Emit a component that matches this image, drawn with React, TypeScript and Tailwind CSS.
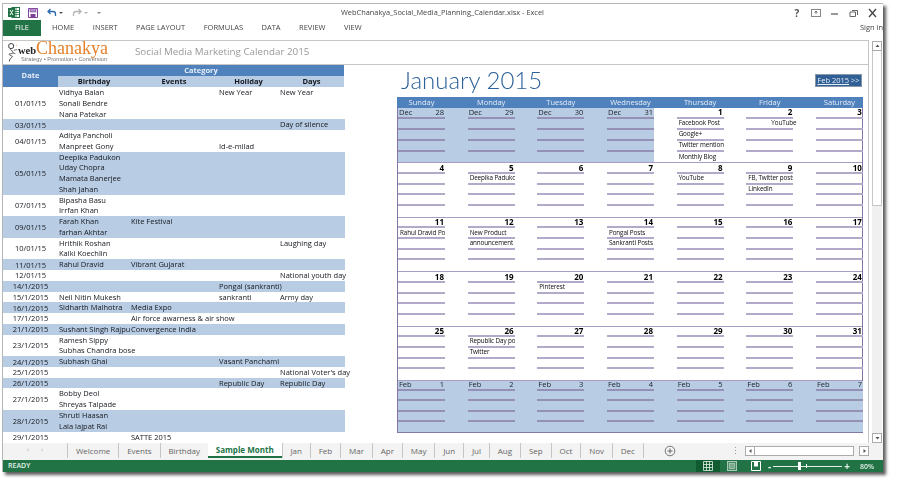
import { Fragment } from 'react'

type Row = { date: string; lines: string[][] }

const rows: Row[] = [
  { date: '01/01/15', lines: [['Vidhya Balan', '', 'New Year', 'New Year'], ['Sonali Bendre'], ['Nana Patekar']] },
  { date: '03/01/15', lines: [['', '', '', 'Day of silence']] },
  { date: '04/01/15', lines: [['Aditya Pancholi'], ['Manpreet Gony', '', 'Id-e-milad']] },
  { date: '05/01/15', lines: [['Deepika Padukon'], ['Uday Chopra'], ['Mamata Banerjee'], ['Shah Jahan']] },
  { date: '07/01/15', lines: [['Bipasha Basu'], ['Irrfan Khan']] },
  { date: '09/01/15', lines: [['Farah Khan', 'Kite Festival'], ['farhan Akhtar']] },
  { date: '10/01/15', lines: [['Hrithik Roshan', '', '', 'Laughing day'], ['Kalki Koechlin']] },
  { date: '11/01/15', lines: [['Rahul Dravid', 'Vibrant Gujarat']] },
  { date: '12/01/15', lines: [['', '', '', 'National youth day']] },
  { date: '14/1/2015', lines: [['', '', 'Pongal (sankranti)']] },
  { date: '15/1/2015', lines: [['Neil Nitin Mukesh', '', 'sankranti', 'Army day']] },
  { date: '16/1/2015', lines: [['Sidharth Malhotra', 'Media Expo']] },
  { date: '17/1/2015', lines: [['', 'Air force awarness & air show']] },
  { date: '21/1/2015', lines: [['Sushant Singh Rajput', 'Convergence India']] },
  { date: '23/1/2015', lines: [['Ramesh Sippy'], ['Subhas Chandra bose']] },
  { date: '24/1/2015', lines: [['Subhash Ghai', '', 'Vasant Panchami']] },
  { date: '25/1/2015', lines: [['', '', '', "National Voter's day"]] },
  { date: '26/1/2015', lines: [['', '', 'Republic Day', 'Republic Day']] },
  { date: '27/1/2015', lines: [['Bobby Deol'], ['Shreyas Talpade']] },
  { date: '28/1/2015', lines: [['Shruti Haasan'], ['Lala lajpat Rai']] },
  { date: '29/1/2015', lines: [['', 'SATTE 2015']] },
]

type Day = { label?: string; num: number; notes?: string[] }

const weeks: Day[][] = [
  [
    { label: 'Dec', num: 28 },
    { label: 'Dec', num: 29 },
    { label: 'Dec', num: 30 },
    { label: 'Dec', num: 31 },
    { num: 1, notes: ['Facebook Post', 'Google+', 'Twitter mention', 'Monthly Blog'] },
    { num: 2, notes: ['YouTube'] },
    { num: 3 },
  ],
  [
    { num: 4 },
    { num: 5, notes: ['Deepika Padukone'] },
    { num: 6 },
    { num: 7 },
    { num: 8, notes: ['YouTube'] },
    { num: 9, notes: ['FB, Twitter posts', 'LinkedIn'] },
    { num: 10 },
  ],
  [
    { num: 11, notes: ['Rahul Dravid Post'] },
    { num: 12, notes: ['New Product', 'announcement'] },
    { num: 13 },
    { num: 14, notes: ['Pongal Posts', 'Sankranti Posts'] },
    { num: 15 },
    { num: 16 },
    { num: 17 },
  ],
  [
    { num: 18 },
    { num: 19 },
    { num: 20, notes: ['Pinterest'] },
    { num: 21 },
    { num: 22 },
    { num: 23 },
    { num: 24 },
  ],
  [
    { num: 25 },
    { num: 26, notes: ['Republic Day post', 'Twitter'] },
    { num: 27 },
    { num: 28 },
    { num: 29 },
    { num: 30 },
    { num: 31 },
  ],
  [1, 2, 3, 4, 5, 6, 7].map((num) => ({ label: 'Feb', num })),
]

const dayNames = ['Sunday', 'Monday', 'Tuesday', 'Wednesday', 'Thursday', 'Friday', 'Saturday']
const ribbonTabs = ['HOME', 'INSERT', 'PAGE LAYOUT', 'FORMULAS', 'DATA', 'REVIEW', 'VIEW']
const sheetTabs = ['Welcome', 'Events', 'Birthday', 'Sample Month', 'Jan', 'Feb', 'Mar', 'Apr', 'May', 'Jun', 'Jul', 'Aug', 'Sep', 'Oct', 'Nov', 'Dec']

const tableCols = 'grid grid-cols-[55px_72px_88px_61px_65px]'
const calCols = 'grid grid-cols-[repeat(6,69.67px)_47px]'

function TableRow({ row, shaded }: { row: Row; shaded: boolean }) {
  return (
    <div className={`${tableCols} ${shaded ? 'bg-[#b8cce4]' : 'bg-white'}`}>
      <div className="flex items-center justify-center leading-[10px]" style={{ gridRow: `span ${row.lines.length}` }}>
        {row.date}
      </div>
      {row.lines.map((line, i) => (
        <Fragment key={i}>
          {[0, 1, 2, 3].map((c) => (
            <div
              key={c}
              className={`h-[10.78px] whitespace-nowrap pl-[1px] leading-[10.78px] ${c === 0 && line[1] ? 'overflow-hidden' : ''}`}
              style={{ gridColumn: c + 2 }}
            >
              {line[c]}
            </div>
          ))}
        </Fragment>
      ))}
    </div>
  )
}

function DayCell({ day, week, col }: { day: Day; week: number; col: number }) {
  const muted = !!day.label
  const slots = [0, 1, 2, 3]
  const line = muted ? 'border-[#9490b6]' : 'border-[#b3a9cb]'
  return (
    <div className={`grid min-h-0 grid-rows-5 ${muted ? 'bg-[#b8cce4]' : ''} ${week === 0 && col === 3 ? 'w-[47px]' : ''}`}>
      <div className={`flex w-[47px] items-center justify-between border-b-2 px-[1px] leading-none ${line} ${muted ? 'text-[7.5px] text-[#20242c]' : 'text-[8px] font-bold text-black'}`}>
        <span>{day.label}</span>
        <span>{day.num}</span>
      </div>
      {slots.map((s) => (
        <div
          key={s}
          className={`flex w-[47px] items-center whitespace-nowrap pl-[2px] text-[6.3px] leading-none tracking-[-0.1px] text-[#0c0c0c] ${s < 3 ? `border-b-2 ${line}` : ''} ${day.num === 2 && !muted ? 'pl-[25px]' : 'overflow-hidden'}`}
        >
          {day.notes?.[s]}
        </div>
      ))}
    </div>
  )
}

function ExcelIcon() {
  return (
    <svg width="12" height="11" viewBox="0 0 12 11">
      <rect x="4" y="0.5" width="7.5" height="10" fill="#fff" stroke="#217346" />
      <path d="M8 1v9M5 3.5h6M5 5.5h6M5 7.5h6" stroke="#217346" strokeWidth="0.8" />
      <rect x="0" y="1" width="7" height="9" fill="#217346" />
      <path d="M2 3l3 5M5 3L2 8" stroke="#fff" strokeWidth="1" />
    </svg>
  )
}

function SaveIcon() {
  return (
    <svg width="10" height="10" viewBox="0 0 10 10">
      <path d="M0.5 0.5h9v9h-9z" fill="#fff" stroke="#7d3f98" />
      <path d="M2 0.5h6v3.5H2z" fill="#b68bc9" stroke="#7d3f98" strokeWidth="0.6" />
      <path d="M2.5 6h5v3.5h-5z" fill="#7d3f98" />
    </svg>
  )
}

function BackArrow({ color, flip }: { color: string; flip?: boolean }) {
  return (
    <svg width="10" height="9" viewBox="0 0 10 9" className={flip ? '-scale-x-100' : ''}>
      <path d="M3.5 1L1 3.5 3.5 6M1 3.5h5a2.5 2.5 0 0 1 2.5 2.5V8" fill="none" stroke={color} strokeWidth="1.3" />
    </svg>
  )
}

function Caret({ color }: { color: string }) {
  return <span className="h-0 w-0 border-x-[2px] border-t-[2px] border-x-transparent" style={{ borderTopColor: color }} />
}

function LogoFigure() {
  return (
    <svg width="12" height="23" viewBox="0 0 14 23" className="shrink-0">
      <circle cx="6" cy="4" r="3" fill="none" stroke="#333" strokeWidth="1.1" />
      <path d="M6 7c-3 2 4 3 2 5s-5 0-4 2 5 1 3 3-3 2-3 5" fill="none" stroke="#333" strokeWidth="1" />
      <path d="M9 9l4-1M8 12l3 1" stroke="#333" strokeWidth="0.8" />
      <circle cx="12" cy="3" r="0.6" fill="#e9852e" />
    </svg>
  )
}

function WinControls() {
  return (
    <div className="ml-auto mr-[4px] flex items-center gap-[7px] text-[#555]">
      <span className="w-[12px] text-center text-[10px] font-bold leading-none">?</span>
      <svg width="12" height="10" viewBox="0 0 12 10">
        <rect x="1.5" y="1.5" width="9" height="7" fill="none" stroke="#888" />
        <path d="M6 3v3M4.5 4.5L6 3l1.5 1.5" fill="none" stroke="#555" strokeWidth="0.8" />
      </svg>
      <svg width="12" height="10" viewBox="0 0 12 10">
        <path d="M2 6h7" stroke="#555" strokeWidth="1.2" />
      </svg>
      <svg width="12" height="10" viewBox="0 0 12 10">
        <path d="M4 2.5h5.5v4.5M2 4h5.5v4.5H2z" fill="none" stroke="#666" />
      </svg>
      <svg width="12" height="10" viewBox="0 0 12 10">
        <path d="M2 1l7 8M9 1L2 9" stroke="#444" strokeWidth="1.3" />
      </svg>
    </div>
  )
}

function ScrollButton({ dir }: { dir: 'up' | 'down' | 'left' | 'right' }) {
  const arrow = { up: 'M1.5 4L3.5 1.5 5.5 4z', down: 'M1.5 2L3.5 4.5 5.5 2z', left: 'M4.5 1L2 3l2.5 2z', right: 'M2.5 1L5 3 2.5 5z' }[dir]
  return (
    <div className="flex h-[10px] w-[10px] shrink-0 items-center justify-center border border-[#ababab] bg-white">
      <svg width="7" height="6" viewBox="0 0 7 6">
        <path d={arrow} fill="#555" />
      </svg>
    </div>
  )
}

function StatusIcons() {
  return (
    <div className="ml-auto flex h-full items-center text-[#e3efe8]">
      <div className="flex h-full w-[24px] items-center justify-center bg-[#0f5c31]">
        <svg width="10" height="10" viewBox="0 0 10 10">
          <path d="M.5.5h9v9h-9zM3.5.5v9M6.5.5v9M.5 3.5h9M.5 6.5h9" fill="none" stroke="#e3efe8" strokeWidth="0.8" />
        </svg>
      </div>
      <div className="flex w-[24px] justify-center">
        <svg width="10" height="10" viewBox="0 0 10 10">
          <rect x="0.5" y="0.5" width="9" height="9" fill="#4f8a68" stroke="#a9c9b6" />
          <rect x="2.5" y="2.5" width="5" height="5" fill="#7ca98d" stroke="#c3dacb" strokeWidth="0.6" />
        </svg>
      </div>
      <div className="flex w-[24px] justify-center">
        <svg width="10" height="10" viewBox="0 0 10 10">
          <path d="M.5.5h9v9h-9z" fill="#217346" stroke="#fff" />
          <path d="M3 .5h4v5H3z" fill="#fff" />
        </svg>
      </div>
      <div className="flex w-[82px] items-center gap-[2px]">
        <span className="text-[10px] font-bold leading-none">-</span>
        <div className="relative h-px flex-1 bg-[#e3efe8]">
          <div className="absolute left-[25px] top-[-3.5px] h-[8px] w-[3px] bg-white" />
          <div className="absolute left-[33px] top-[-1.5px] h-[4px] w-px bg-white" />
        </div>
        <span className="text-[10px] font-bold leading-none">+</span>
      </div>
      <span className="ml-[10px] mr-[9px] text-[7px] leading-none">80%</span>
    </div>
  )
}

export default function App() {
  return (
    <div className="h-[480px] w-[900px] overflow-hidden bg-white pl-[2px] pt-[3px] font-['Open_Sans',sans-serif]">
      <div className="flex h-[469px] w-[881px] flex-col border-l border-t border-[#b5b5b5] bg-white shadow-[3px_3px_3px_rgba(40,40,40,0.75)] blur-[0.35px]">
        {/* title bar */}
        <div className="flex h-[15px] shrink-0 items-center pl-[5px] pt-[2px]">
          <ExcelIcon />
          <div className="ml-[8px] flex items-center gap-[9px]">
            <SaveIcon />
            <div className="flex items-center gap-[2px]">
              <BackArrow color="#2b6cb0" />
              <Caret color="#555" />
            </div>
            <div className="flex items-center gap-[2px]">
              <BackArrow color="#b5b5b5" flip />
              <Caret color="#b5b5b5" />
            </div>
            <Caret color="#888" />
          </div>
          <span className="ml-[240px] whitespace-nowrap text-[7.4px] text-[#444]">WebChanakya_Social_Media_Planning_Calendar.xlsx - Excel</span>
          <WinControls />
        </div>

        {/* ribbon tabs */}
        <div className="flex h-[21px] shrink-0 items-start pt-[1px] text-[7.5px] text-[#444]">
          <div className="flex h-[16px] w-[38px] items-center justify-center bg-[#217346] text-white">FILE</div>
          <div className="ml-[11px] flex h-[16px] items-center gap-[18.5px]">
            {ribbonTabs.map((t) => (
              <span key={t}>{t}</span>
            ))}
          </div>
          <span className="ml-auto flex h-[16px] items-center whitespace-nowrap text-[#444]">Sign in</span>
        </div>

        {/* sheet + vertical scrollbar */}
        <div className="flex min-h-0 flex-1">
          <div className="flex w-[866px] shrink-0 flex-col border-r border-t border-[#c6c6c6]">
            <div className="flex h-[24px] shrink-0 items-center border-b border-[#c6c6c6]">
              <div className="flex w-[108px] shrink-0 items-center pl-[3px]">
                <LogoFigure />
                <div className="mb-[1px] flex flex-col">
                  <div className="flex h-[14px] items-baseline whitespace-nowrap font-['Liberation_Serif',serif] leading-[14px]">
                    <span className="text-[10.5px] font-bold text-[#222]">web</span>
                    <span className="text-[18px] text-[#e5812b]">Chanakya</span>
                  </div>
                  <span className="mt-[2px] whitespace-nowrap pl-[3px] font-['Liberation_Sans',sans-serif] text-[5.7px] leading-none text-[#777]">Strategy • Promotion • Conversion</span>
                </div>
              </div>
              <span className="ml-[24px] whitespace-nowrap text-[9.8px] text-[#999]">Social Media Marketing Calendar 2015</span>
            </div>

            <div className="flex min-h-0 flex-1">
              {/* category table */}
              <div className="w-[342px] shrink-0 overflow-visible text-[7.5px] font-medium text-[#14181e]">
                <div className={`${tableCols} font-bold`}>
                  <div className="row-span-2 flex items-center justify-center bg-[#4f81bd] text-[#e6eef7]">Date</div>
                  <div className="col-span-4 flex h-[10.5px] items-center justify-center bg-[#4f81bd] text-[#e6eef7]">Category</div>
                  {['Birthday', 'Events', 'Holiday', 'Days'].map((h) => (
                    <div key={h} className="flex h-[11.5px] items-center justify-center bg-[#b8cce4]">
                      {h}
                    </div>
                  ))}
                </div>
                {rows.map((r, i) => (
                  <TableRow key={r.date} row={r} shaded={i % 2 === 1} />
                ))}
              </div>

              {/* month calendar */}
              <div className="ml-[52px] flex w-[466px] shrink-0 flex-col">
                <div className="flex h-[32px] items-center justify-between pr-[1px]">
                  <span className="pb-[3px] pl-[4px] font-['Lato',sans-serif] text-[24px] font-light leading-none text-[#2d6199]">January 2015</span>
                  <span className="mb-[1px] flex h-[13px] w-[47px] items-center justify-center whitespace-nowrap border border-[#8a97a8] bg-[#2f5f94] text-[7.5px] text-[#e6eef7]">
                    <span className="underline">Feb 2015</span>&nbsp;&gt;&gt;
                  </span>
                </div>
                <div className={`${calCols} h-[11px] shrink-0 items-center bg-[#4f81bd] pl-[1px] text-center text-[7.5px] text-[#e6eef7]`}>
                  {dayNames.map((d) => (
                    <span key={d} className="w-[47px] whitespace-nowrap">
                      {d}
                    </span>
                  ))}
                </div>
                <div className="border-x border-b border-[#8576a8]">
                  {weeks.map((week, w) => (
                    <div key={w} className={`${calCols} grid-rows-[minmax(0,1fr)] ${w === 5 ? 'h-[52px]' : 'h-[54.4px]'} ${w > 0 ? 'border-t border-[#a99cc4]' : ''} ${w === 5 ? 'bg-[#b8cce4]' : ''}`}>
                      {week.map((d, c) => (
                        <DayCell key={c} day={d} week={w} col={c} />
                      ))}
                    </div>
                  ))}
                </div>
              </div>
            </div>
          </div>

          <div className="ml-[3px] flex w-[10px] shrink-0 flex-col pt-[1px]">
            <ScrollButton dir="up" />
            <div className="h-[155px] border-x border-b border-[#c6c6c6] bg-white" />
            <div className="flex-1 bg-[#f0f0f0]" />
            <ScrollButton dir="down" />
          </div>
        </div>

        {/* sheet tabs */}
        <div className="flex h-[17px] shrink-0 items-start bg-[#f3f3f3] text-[8px] text-[#666]">
          <div className="flex h-[15px] w-[64px] shrink-0 items-center justify-center gap-[12px] text-[7px] text-[#aaa]">
            <span>‹</span>
            <span>›</span>
          </div>
          {sheetTabs.map((t) => (
            <div
              key={t}
              className={`flex h-[15px] items-center whitespace-nowrap px-[7.9px] ${t === 'Sample Month' ? 'border-b-2 border-[#217346] bg-white font-bold text-[#217346]' : 'border-l border-[#c6c6c6]'}`}
            >
              {t}
            </div>
          ))}
          <div className="flex h-[15px] items-center border-l border-[#c6c6c6]">
            <svg width="12" height="12" viewBox="0 0 12 12" className="ml-[20px]">
              <circle cx="6" cy="6" r="4.8" fill="none" stroke="#777" />
              <path d="M6 3.5v5M3.5 6h5" stroke="#666" />
            </svg>
          </div>
          <div className="ml-auto mr-[14px] flex h-[15px] items-center">
            <span className="mr-[9px] flex flex-col gap-[2px]">
              <span className="h-px w-px bg-[#999]" />
              <span className="h-px w-px bg-[#999]" />
              <span className="h-px w-px bg-[#999]" />
            </span>
            <ScrollButton dir="left" />
            <div className="h-[10px] w-[99px] border-y border-r border-[#ababab] bg-white" />
            <div className="w-[5px]" />
            <ScrollButton dir="right" />
          </div>
        </div>

        {/* status bar */}
        <div className="flex h-[12px] shrink-0 items-center bg-[#217346] pl-[5px] text-[7px] font-semibold text-[#e3efe8]">
          <span>READY</span>
          <StatusIcons />
        </div>
      </div>
    </div>
  )
}
